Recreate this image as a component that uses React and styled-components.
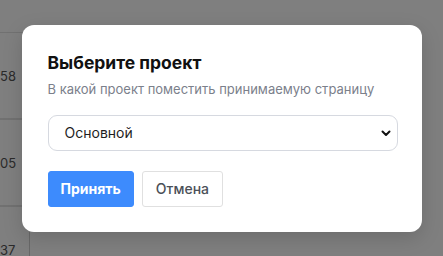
import styled, { createGlobalStyle } from "styled-components"

const Global = createGlobalStyle`
    html, body {
        margin: 0;
        padding: 0;
        background: #fff;
        font-family: Inter, "Noto Sans", sans-serif;
    }
    * { box-sizing: border-box; }
`

const Page = styled.div`
    position: relative;
    width: 443px;
    height: 256px;
    overflow: hidden;
    background: #fff;
`

const Table = styled.div`
    display: flex;
    flex-direction: column;
    padding-top: 32px;
    width: 60px;
`

const Row = styled.div`
    height: 87px;
    border-top: 1px solid #e2e2e2;
    border-bottom: 1px solid #e2e2e2;
    display: flex;
    flex-direction: column;
`

const Cell = styled.div`
    flex: 1;
    display: flex;
    align-items: center;
    font-size: 13px;
    color: #555;
    border-right: ${p => (p.$line ? "1px solid #d0d0d0" : "none")};
    width: 30px;
    margin: 8px 0 8px;
`

const Overlay = styled.div`
    position: absolute;
    inset: 0;
    background: rgba(0, 0, 0, 0.5);
    display: flex;
    align-items: center;
    justify-content: center;
`

const Modal = styled.div`
    width: 400px;
    height: 207px;
    background: #fff;
    border-radius: 12px;
    padding: 25px 24px 24px 26px;
    box-shadow: 0 6px 20px rgba(0, 0, 0, 0.15);
    display: flex;
    flex-direction: column;
`

const Title = styled.h2`
    margin: 0;
    font-size: 17.5px;
    font-weight: 700;
    color: #111;
    line-height: 25px;
`

const Subtitle = styled.p`
    margin: 5px 0 0;
    font-size: 13px;
    color: #7b808b;
    line-height: 18px;
`

const SelectBox = styled.div`
    margin-top: 17px;
    height: 36px;
    border: 1px solid #d6d9e0;
    border-radius: 9px;
    display: flex;
    align-items: center;
    justify-content: space-between;
    padding: 0 5px 0 16px;
    font-size: 14px;
    color: #1e1e1e;
`

const Buttons = styled.div`
    margin-top: 20px;
    display: flex;
    gap: 8px;
`

const Button = styled.button`
    height: 36px;
    padding: 0 ${p => (p.$primary ? "12px" : "13px")};
    min-width: ${p => (p.$primary ? "84px" : "80px")};
    border-radius: 3px;
    font-family: inherit;
    font-size: 14px;
    font-weight: ${p => (p.$primary ? 700 : 500)};
    color: ${p => (p.$primary ? "#fff" : "#4b5058")};
    background: ${p => (p.$primary ? "#3d8bfd" : "#fff")};
    border: 1px solid ${p => (p.$primary ? "#3d8bfd" : "#e0e0e0")};
`

const Chevron = () => (
    <svg width="12" height="12" viewBox="0 0 12 12">
        <path d="M2.5 4.5 L6 8 L9.5 4.5" fill="none" stroke="#111" strokeWidth="2" strokeLinecap="round" strokeLinejoin="round" />
    </svg>
)

export default function App() {
    return (
        <>
            <Global />
            <Page>
                <Table>
                    <Row><Cell>58</Cell></Row>
                    <Row><Cell>05</Cell></Row>
                    <Row><Cell $line>37</Cell></Row>
                </Table>
                <Overlay>
                    <Modal>
                        <Title>Выберите проект</Title>
                        <Subtitle>В какой проект поместить принимаемую страницу</Subtitle>
                        <SelectBox>
                            <span>Основной</span>
                            <Chevron />
                        </SelectBox>
                        <Buttons>
                            <Button $primary>Принять</Button>
                            <Button>Отмена</Button>
                        </Buttons>
                    </Modal>
                </Overlay>
            </Page>
        </>
    )
}
